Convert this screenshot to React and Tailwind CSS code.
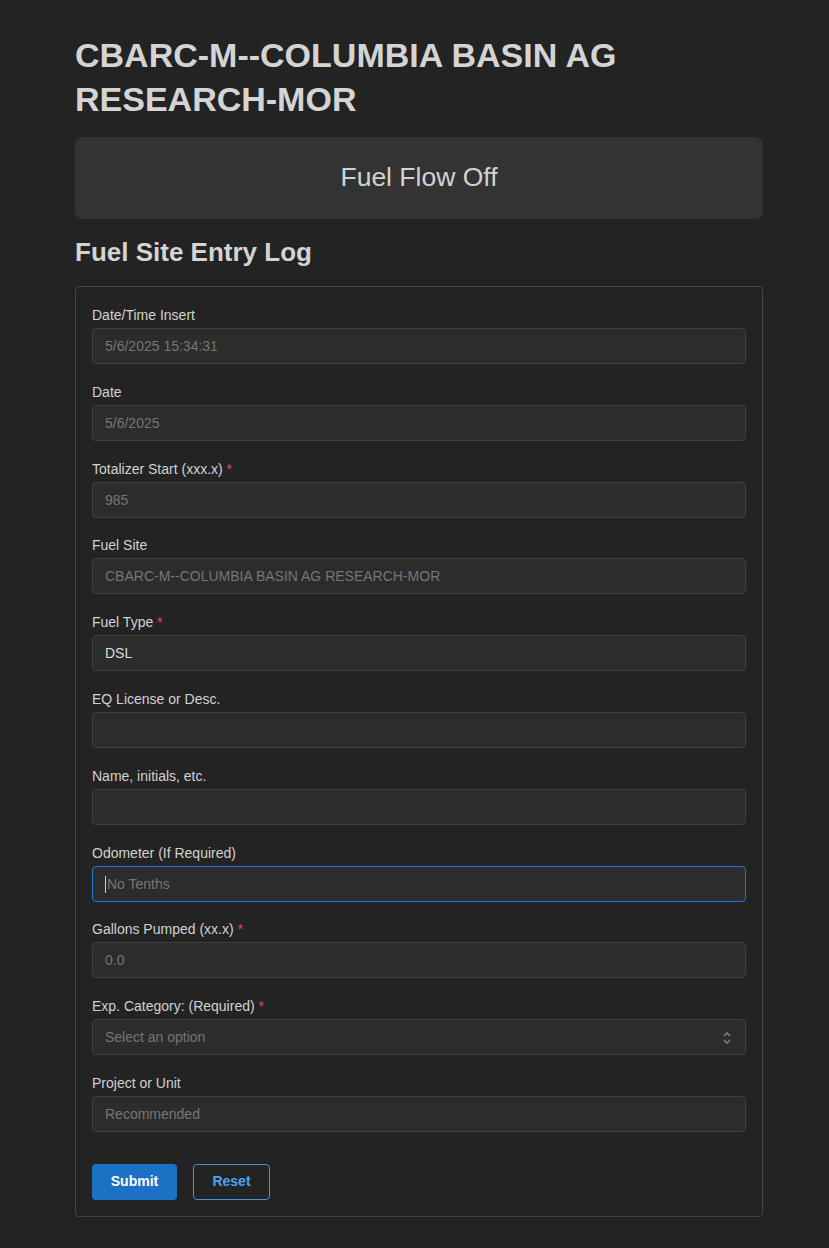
const fields = [
  { label: 'Date/Time Insert', value: '5/6/2025 15:34:31', muted: true },
  { label: 'Date', value: '5/6/2025', muted: true },
  { label: 'Totalizer Start (xxx.x)', value: '985', muted: true, required: true },
  { label: 'Fuel Site', value: 'CBARC-M--COLUMBIA BASIN AG RESEARCH-MOR', muted: true },
  { label: 'Fuel Type', value: 'DSL', required: true },
  { label: 'EQ License or Desc.', value: '' },
  { label: 'Name, initials, etc.', value: '' },
  { label: 'Odometer (If Required)', value: 'No Tenths', muted: true, focused: true },
  { label: 'Gallons Pumped (xx.x)', value: '0.0', muted: true, required: true },
  { label: 'Exp. Category: (Required)', value: 'Select an option', muted: true, required: true, select: true },
  { label: 'Project or Unit', value: 'Recommended', muted: true },
];

const Field = ({ label, value, muted, required, focused, select }) => (
  <div className="mb-[17.8px]">
    <div className="text-[14px] leading-[20px] text-[#d2d2d2] mb-[3px]">
      {label}
      {required && <span className="text-[#e5484d]"> *</span>}
    </div>
    <div
      className={`relative h-[36px] rounded-[4px] border bg-[#2c2c2c] flex items-center px-3 pt-px text-[14px] ${
        focused ? 'border-[#1f78d1]' : 'border-[#404040]'
      } ${muted ? 'text-[#767676]' : 'text-[#dedede]'}`}
    >
      {focused && <span className="w-px h-[17px] bg-[#cfcfcf] mr-px" />}
      <span>{value}</span>
      {select && (
        <svg className="absolute right-[13px] w-[10px] h-[14px]" viewBox="0 0 10 14" fill="none" stroke="#8a8a8a" strokeWidth="1.3">
          <path d="M2 5l3-3 3 3" />
          <path d="M2 9l3 3 3-3" />
        </svg>
      )}
    </div>
  </div>
);

const App = () => {
  return (
    <div className="min-h-screen bg-[#232323] font-['Liberation_Sans',Arial,sans-serif]">
      <div className="w-[688px] ml-[75px] pt-[33px] pb-[32px]">
        <h1 className="text-[34px] leading-[44px] font-bold text-[#d4d4d4] mb-4">
          CBARC-M--COLUMBIA BASIN AG RESEARCH-MOR
        </h1>

        <div className="h-[82px] rounded-lg bg-[#333333] flex items-center justify-center">
          <span className="text-[26.5px] text-[#d2d2d2]">Fuel Flow Off</span>
        </div>

        <h2 className="mt-[18px] mb-[18px] text-[26px] leading-[31px] font-bold text-[#d4d4d4]">
          Fuel Site Entry Log
        </h2>

        <div className="rounded-[4px] border border-[#454545] pt-[18px] pb-4 px-4">
          {fields.map((f) => (
            <Field key={f.label} {...f} />
          ))}
          <div className="flex gap-4 mt-[32px]">
            <button className="h-[36px] w-[85px] rounded-[4px] bg-[#1b72c4] text-white text-[14px] font-bold">
              Submit
            </button>
            <button className="h-[36px] w-[77px] rounded-[4px] border border-[#3d96e2] text-[#4aa3f0] text-[14px] font-bold">
              Reset
            </button>
          </div>
        </div>
      </div>
    </div>
  );
};

export default App;
